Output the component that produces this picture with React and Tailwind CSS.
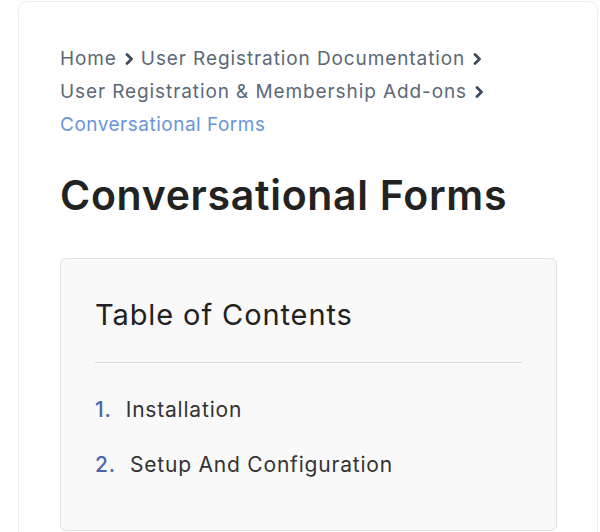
import React from 'react';

const Chevron = () => (
  <svg width="10" height="12" viewBox="0 0 10 12" className="inline-block mx-[7px] -mt-[2px]">
    <path d="M3 1.5 L7.5 6 L3 10.5" fill="none" stroke="#3f4b5b" strokeWidth="2.8" strokeLinecap="round" strokeLinejoin="round" />
  </svg>
);

const items = ['Installation', 'Setup And Configuration'];

export default function App() {
  return (
    <div className="min-h-[532px] bg-white font-['Inter',sans-serif]">
      <div className="ml-[18px] mt-px min-h-[545px] w-[580px] rounded-lg border border-[#efefef] bg-white pl-[41px] pr-[40px] pt-[40px]">
        {/* Breadcrumb */}
        <nav className="text-[19px] leading-[33px] tracking-[0.9px] text-[#5b6878]">
          <a>Home</a>
          <Chevron />
          <a>User Registration Documentation</a>
          <Chevron />
          <br />
          <a>User Registration &amp; Membership Add-ons</a>
          <Chevron />
          <br />
          <span className="tracking-[0.5px] text-[#6a95d8]">Conversational Forms</span>
        </nav>

        <h1 className="mt-[30px] text-[41px] font-semibold leading-[48px] tracking-[0.7px] text-[#222222]">Conversational Forms</h1>

        {/* Table of contents */}
        <div className="mt-[39px] w-[497px] rounded-md border border-[#e2e2e2] bg-[#f9f9f9] px-[34px] pt-[37px] pb-[49px]">
          <h2 className="text-[29px] leading-[38px] tracking-[0.9px] text-[#222222]">Table of Contents</h2>
          <div className="mt-[28px] h-px bg-[#dcdcdc]" />
          <ol className="mt-[30px] flex flex-col gap-[22px] text-[21px] leading-[33px] tracking-[0.8px] text-[#333333]">
            {items.map((item, i) => (
              <li key={item}>
                <span className="mr-[14px] font-medium text-[#4d63ad]">{i + 1}.</span>
                <span>{item}</span>
              </li>
            ))}
          </ol>
        </div>
      </div>
    </div>
  );
}
